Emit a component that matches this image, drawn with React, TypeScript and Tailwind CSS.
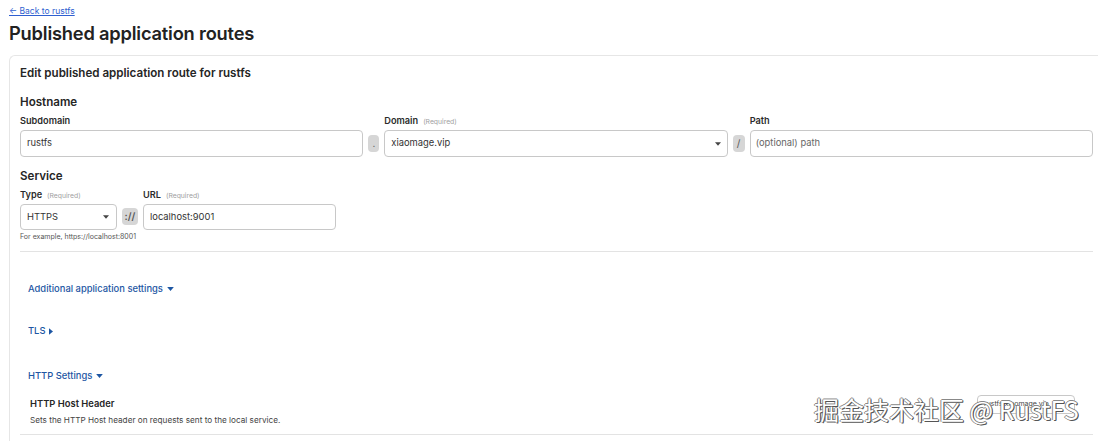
import React from "react";

function Caret({ className = "" }: { className?: string }) {
  return (
    <svg viewBox="0 0 10 6" className={className} fill="currentColor">
      <path d="M0 0h10L5 6z" />
    </svg>
  );
}

function CaretRight({ className = "" }: { className?: string }) {
  return (
    <svg viewBox="0 0 6 10" className={className} fill="currentColor">
      <path d="M0 0v10l6-5z" />
    </svg>
  );
}

function Label({ text, required }: { text: string; required?: boolean }) {
  return (
    <div className="flex items-baseline gap-[5px] h-[14px] leading-[14px]">
      <span className="text-[9.2px] font-semibold text-[#2b2b2b]">{text}</span>
      {required && <span className="text-[6.8px] text-[#a0a0a0]">(Required)</span>}
    </div>
  );
}

function Pill({ children, w }: { children: React.ReactNode; w: string }) {
  return (
    <div
      className={`${w} h-[17px] mb-[5px] self-end rounded-[4px] bg-[#d6d6d6] flex items-center justify-center text-[10px] text-[#555]`}
    >
      {children}
    </div>
  );
}

function Toggle({ text, open }: { text: string; open: boolean }) {
  return (
    <div className="flex items-center gap-[4px] pl-[8px] h-[14px] text-[9.4px] font-medium text-[#1d56a3]">
      <span>{text}</span>
      {open ? <Caret className="w-[7px] h-[4px]" /> : <CaretRight className="w-[4px] h-[7px]" />}
    </div>
  );
}

export default function App() {
  return (
    <div
      className="w-[1098px] h-[441px] overflow-hidden bg-white relative"
      style={{ fontFamily: "Inter, 'Noto Sans', sans-serif" }}
    >
      <div className="pl-[9px]">
        <a href="#" className="block pt-[5px] text-[8.5px] leading-[12px] text-[#2f5fd0] underline">
          ← Back to rustfs
        </a>
        <h1 className="mt-[4px] text-[18.3px] leading-[24px] font-semibold text-[#222] tracking-[-0.2px]">
          Published application routes
        </h1>

        <div className="mt-[10px] rounded-tl-[6px] border border-r-0 border-b-0 border-[#e6e6e6] pl-[10px] pr-[5px] pt-[8px] h-[400px]">
          <h2 className="text-[11.6px] leading-[18px] font-semibold text-[#262626]">
            Edit published application route for rustfs
          </h2>

          <h3 className="mt-[11px] text-[11.6px] leading-[18px] font-semibold text-[#262626]">Hostname</h3>
          <div className="mt-[3px] flex gap-[5px]">
            <div className="flex-1 flex flex-col gap-[2px]">
              <Label text="Subdomain" />
              <div className="h-[27px] rounded-[4px] border border-[#c8c8c8] flex items-center px-[6px] text-[9.4px] text-[#333]">
                rustfs
              </div>
            </div>
            <Pill w="w-[11px]">.</Pill>
            <div className="flex-1 flex flex-col gap-[2px]">
              <Label text="Domain" required />
              <div className="h-[27px] rounded-[4px] border border-[#c8c8c8] flex items-center justify-between pl-[6px] pr-[6px] text-[9.4px] text-[#333]">
                <span>xiaomage.vip</span>
                <Caret className="w-[6px] h-[4px] text-[#444]" />
              </div>
            </div>
            <Pill w="w-[12px]">/</Pill>
            <div className="flex-1 flex flex-col gap-[2px]">
              <Label text="Path" />
              <div className="h-[27px] rounded-[4px] border border-[#c8c8c8] flex items-center px-[5px] text-[9.4px] text-[#666]">
                (optional) path
              </div>
            </div>
          </div>

          <h3 className="mt-[10px] text-[11.6px] leading-[18px] font-semibold text-[#262626]">Service</h3>
          <div className="mt-[3px] flex gap-[5px]">
            <div className="w-[97px] flex flex-col gap-[2px]">
              <Label text="Type" required />
              <div className="h-[26px] rounded-[4px] border border-[#c8c8c8] flex items-center justify-between pl-[6px] pr-[7px] text-[9.4px] text-[#333]">
                <span>HTTPS</span>
                <Caret className="w-[6px] h-[4px] text-[#444]" />
              </div>
            </div>
            <div className="w-[16px] h-[17px] mb-[5px] self-end rounded-[4px] bg-[#d6d6d6] flex items-center justify-center text-[10px] font-semibold text-[#555]">
              ://
            </div>
            <div className="w-[193px] flex flex-col gap-[2px]">
              <Label text="URL" required />
              <div className="h-[26px] rounded-[4px] border border-[#c8c8c8] flex items-center px-[6px] text-[9.4px] text-[#333]">
                localhost:9001
              </div>
            </div>
          </div>
          <p className="mt-[2px] text-[7px] leading-[10px] text-[#555]">For example, https://localhost:8001</p>

          <div className="mt-[9px] border-t border-[#e3e3e3]" />

          <div className="mt-[30px]">
            <Toggle text="Additional application settings" open />
          </div>
          <div className="mt-[28px]">
            <Toggle text="TLS" open={false} />
          </div>
          <div className="mt-[31px]">
            <Toggle text="HTTP Settings" open />
          </div>

          <div className="mt-[14px] pl-[10px] pr-[18px] flex items-start justify-between">
            <div>
              <div className="text-[9.4px] leading-[14px] font-semibold text-[#262626]">HTTP Host Header</div>
              <div className="mt-[4px] text-[8.2px] leading-[11px] text-[#444]">
                Sets the HTTP Host header on requests sent to the local service.
              </div>
            </div>
            <div className="w-[98px] h-[19px] -mt-[2px] rounded-[4px] border border-[#c8c8c8] flex items-center px-[6px] text-[7px] text-[#444] overflow-hidden whitespace-nowrap">
              rustfs.xiaomage.vip
            </div>
          </div>
          <div className="mt-[8px] border-t border-[#e3e3e3]" />
        </div>
      </div>

      <div
        className="absolute left-[814px] top-[393px] text-[25px] leading-[32px] text-white whitespace-nowrap [text-shadow:1px_1px_0_#555,-1px_0_0_#888,0_-1px_0_#888,1px_0_0_#666]"
        style={{ fontFamily: "'Noto Sans CJK SC', 'Noto Sans', sans-serif" }}
      >
        掘金技术社区 @ RustFS
      </div>
    </div>
  );
}
